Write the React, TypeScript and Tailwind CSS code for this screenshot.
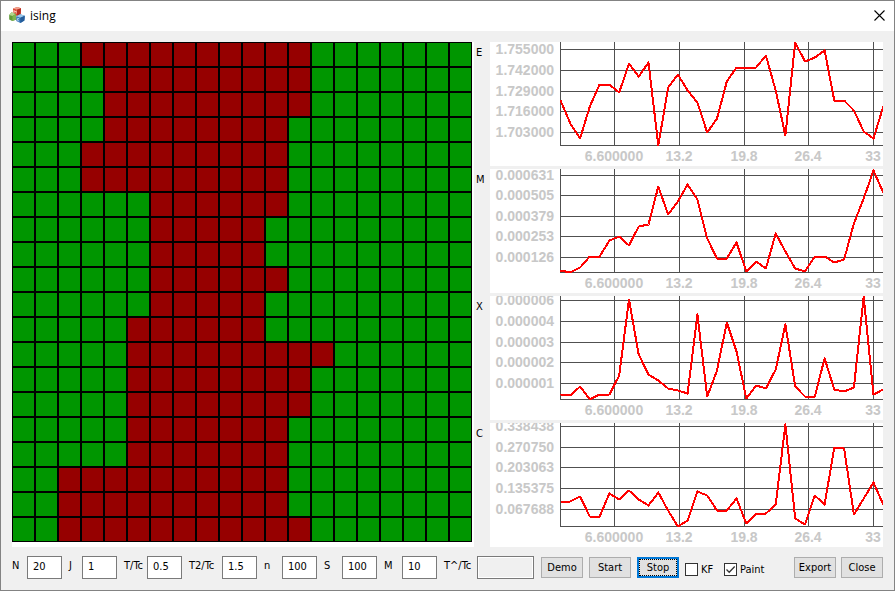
import { useState } from "react";

// [first red column, first green column after it] for every lattice row
const spins: [number, number][] = [
  [3, 13], [4, 13], [4, 13], [4, 12], [3, 12],
  [3, 12], [6, 12], [6, 11], [6, 11], [6, 12],
  [6, 11], [5, 11], [5, 14], [5, 13], [5, 13],
  [5, 12], [5, 12], [2, 12], [2, 12], [2, 13],
];

type Series = { name: string; labels: string[]; lines: number[]; points: number[] };

const charts: Series[] = [
  {
    name: "E",
    labels: ["1.755000", "1.742000", "1.729000", "1.716000", "1.703000"],
    lines: [7, 28, 49, 69, 90],
    points: [58, 81, 96, 64, 42, 42, 50, 21, 34, 20, 103, 45, 32, 48, 60, 90, 76, 39, 25, 25, 25, 13, 48, 93, 0, 19, 15, 8, 58, 58, 68, 89, 96, 64],
  },
  {
    name: "M",
    labels: ["0.000631", "0.000505", "0.000379", "0.000253", "0.000126"],
    lines: [6, 26, 47, 67, 88],
    points: [101, 103, 98, 87, 87, 71, 67, 76, 57, 55, 17, 45, 32, 15, 30, 69, 89, 89, 73, 102, 92, 99, 64, 82, 99, 102, 87, 87, 93, 90, 54, 29, 1, 23],
  },
  {
    name: "X",
    labels: ["0.000006", "0.000004", "0.000003", "0.000002", "0.000001"],
    lines: [4, 25, 46, 66, 87],
    points: [98, 99, 90, 103, 98, 98, 79, 3, 58, 78, 84, 92, 94, 97, 18, 100, 74, 26, 55, 102, 89, 92, 73, 28, 90, 100, 100, 62, 93, 95, 91, 0, 98, 93],
  },
  {
    name: "C",
    labels: ["0.338438", "0.270750", "0.203063", "0.135375", "0.067688"],
    lines: [3, 24, 44, 65, 86],
    points: [78, 78, 73, 93, 93, 70, 76, 67, 76, 82, 69, 87, 103, 97, 68, 72, 87, 87, 75, 100, 90, 90, 81, 1, 95, 101, 72, 81, 24, 25, 91, 75, 59, 81],
  },
];

const ticks = [
  { x: 124, text: "6.600000" },
  { x: 189, text: "13.2" },
  { x: 254, text: "19.8" },
  { x: 318, text: "26.4" },
  { x: 383, text: "33" },
];

function Chart({ series }: { series: Series }) {
  const path = series.points
    .map((y, i) => `${(70.5 + i * 9.78).toFixed(1)},${y + 0.5}`)
    .join(" ");
  return (
    <svg viewBox="0 0 393 124" className="block w-full bg-white" role="img" aria-label={`${series.name} history`}>
      <g fill="#c8c8c8" className="font-['Liberation_Sans',Arial,sans-serif] text-[14px] font-bold">
        {series.labels.map((t, i) => (
          <text key={t} x="64" y={series.lines[i] + 5} textAnchor="end">{t}</text>
        ))}
        {ticks.map((t) => (
          <text key={t.text} x={t.x} y="119" textAnchor="middle">{t.text}</text>
        ))}
      </g>
      <g stroke="#505050" shapeRendering="crispEdges">
        {ticks.map((t) => (
          <line key={t.x} x1={t.x + 0.5} x2={t.x + 0.5} y1="0" y2="104" />
        ))}
        {[...series.lines, 103].map((y) => (
          <line key={y} x1="70" x2="393" y1={y + 0.5} y2={y + 0.5} />
        ))}
        <line x1="70.5" x2="70.5" y1="0" y2="104" />
      </g>
      <svg x="70" y="0" width="323" height="104" viewBox="70 0 323 104">
        <polyline points={path} fill="none" stroke="#ff0000" strokeWidth="2" strokeLinejoin="round" shapeRendering="crispEdges" />
      </svg>
    </svg>
  );
}

const fields = [
  { label: "N", value: "20", width: "w-[15px]" },
  { label: "J", value: "1", width: "w-[13px]" },
  { label: "T/Tc", value: "0.5", width: "w-[23px]" },
  { label: "T2/Tc", value: "1.5", width: "w-[33px]" },
  { label: "n", value: "100", width: "w-[18px]" },
  { label: "S", value: "100", width: "w-[18px]" },
  { label: "M", value: "10", width: "w-[18px]" },
];

function PushButton({ children, focused = false }: { children: string; focused?: boolean }) {
  return (
    <button
      type="button"
      className={
        focused
          ? "h-[21px] w-[42px] border-2 border-[#0078d7] bg-[#e1e1e1]"
          : "h-[21px] w-[42px] border border-[#adadad] bg-[#e1e1e1]"
      }
    >
      <span
        className={
          focused
            ? "flex h-full items-center justify-center border border-dotted border-black"
            : "flex h-full items-center justify-center"
        }
      >
        {children}
      </span>
    </button>
  );
}

function TickBox({ label, initial, width }: { label: string; initial: boolean; width: string }) {
  const [on, setOn] = useState(initial);
  return (
    <label className={`flex items-center gap-[3px] pt-1 ${width}`}>
      <span className="grid shrink-0">
        <input
          type="checkbox"
          checked={on}
          onChange={(e) => setOn(e.target.checked)}
          className="col-start-1 row-start-1 size-[13px] appearance-none border border-[#333333] bg-white"
        />
        {on && (
          <svg viewBox="0 0 13 13" className="pointer-events-none col-start-1 row-start-1 size-[13px]" aria-hidden="true">
            <path d="M2.5 6.5 L5.2 9.3 L10.7 3.5" fill="none" stroke="#333333" strokeWidth="1.3" />
          </svg>
        )}
      </span>
      {label}
    </label>
  );
}

function AppIcon() {
  return (
    <svg viewBox="0 0 16 16" className="size-4" aria-hidden="true">
      <path d="M4 1.6 L8.3 0 L12 1.2 L11.6 7.2 L8 9 L4.3 7.4 Z" fill="#d9452f" />
      <path d="M4 1.6 L8.3 0 L12 1.2 L8 2.8 Z" fill="#f0a28e" />
      <path d="M8 2.8 L12 1.2 L11.6 7.2 L8 9 Z" fill="#b52c20" />
      <path d="M5 6 V3.4 L6.2 5 L7.2 3.8 V6.6" fill="none" stroke="#ffd9cf" strokeWidth="0.8" />
      <path d="M0.2 8 L2.6 5.2 L6.6 7 L7.6 12.6 L3.2 14 L0.2 12.6 Z" fill="#5f9a38" />
      <path d="M0.2 8 L2.6 5.2 L6.6 7 L3.6 9 Z" fill="#b5d68e" />
      <path d="M3.6 9 L6.6 7 L7.6 12.6 L3.2 14 Z" fill="#7fb552" />
      <path d="M7.2 9.2 L11.2 7.2 L15.8 8.8 L15.4 13.6 L11.4 16 L7.4 14 Z" fill="#3577b8" />
      <path d="M7.2 9.2 L11.2 7.2 L15.8 8.8 L11.4 10.8 Z" fill="#9cc8ea" />
      <path d="M11.4 10.8 L15.8 8.8 L15.4 13.6 L11.4 16 Z" fill="#245c9a" />
      <path d="M10.2 11.8 L8.6 11.4 V13.4 L10.2 14" fill="none" stroke="#d6eafa" strokeWidth="0.8" />
    </svg>
  );
}

export default function App() {
  return (
    <div className="flex min-h-screen flex-col border border-[#838383] bg-[#f0f0f0] font-['DejaVu_Sans_Condensed','DejaVu_Sans',Tahoma,sans-serif] text-[11px] leading-[13px] text-black">
      <header className="flex h-[30px] items-center bg-white pr-[9px] pb-[2px] pl-2">
        <AppIcon />
        <h1 className="ml-[5px] pt-[2px] font-['Open_Sans','Noto_Sans',sans-serif] text-[12px] leading-4">ising</h1>
        <button type="button" aria-label="Close window" className="ml-auto">
          <svg viewBox="0 0 11 11" className="size-[11px]" aria-hidden="true">
            <path d="M0.5 0.5 L10.5 10.5 M10.5 0.5 L0.5 10.5" stroke="#000000" strokeWidth="1.1" />
          </svg>
        </button>
      </header>

      <main className="grid grid-cols-[462fr_409fr] items-start px-[11px] pt-[11px]">
        <div className="bg-white pr-[2px] pb-[5px]">
          <div className="grid grid-cols-20">
            {spins.flatMap(([start, end], row) =>
              Array.from({ length: 20 }, (_, col) => (
                <div
                  key={`${row}-${col}`}
                  className={
                    col >= start && col < end
                      ? "h-[25px] border border-black bg-[#960000]"
                      : "h-[25px] border border-black bg-[#009600]"
                  }
                />
              )),
            )}
          </div>
        </div>
        <div className="flex flex-col gap-[3px]">
          {charts.map((c) => (
            <section key={c.name} className="flex">
              <h2 className="w-4 shrink-0 pt-1 pl-[2px]">{c.name}</h2>
              <div className="min-w-0 flex-1">
                <Chart series={c} />
              </div>
            </section>
          ))}
        </div>
      </main>

      <form className="flex items-center gap-[6px] px-[11px] pt-[9px] pb-[11px]" onSubmit={(e) => e.preventDefault()}>
        <div className="flex items-center gap-[7px] pr-px">
          {fields.map((f) => (
            <div key={f.label} className="flex items-center">
              <label htmlFor={`field-${f.label}`} className={`pb-1 ${f.width}`}>{f.label}</label>
              <input
                id={`field-${f.label}`}
                defaultValue={f.value}
                className="h-[23px] w-[35px] border border-[#7a7a7a] bg-white pb-[2px] pl-[5px]"
              />
            </div>
          ))}
          <div className="flex items-center">
            <label htmlFor="critical" className="w-[33px] pb-1">T^/Tc</label>
            <input
              id="critical"
              readOnly
              className="h-[23px] w-[57px] border border-[#7a7a7a] bg-[#f0f0f0] inset-ring inset-ring-white"
            />
          </div>
        </div>
        <PushButton>Demo</PushButton>
        <PushButton>Start</PushButton>
        <PushButton focused>Stop</PushButton>
        <TickBox label="KF" initial={false} width="w-[33px]" />
        <TickBox label="Paint" initial width="w-[46px]" />
        <div className="ml-auto flex gap-[5px]">
          <PushButton>Export</PushButton>
          <PushButton>Close</PushButton>
        </div>
      </form>
    </div>
  );
}
